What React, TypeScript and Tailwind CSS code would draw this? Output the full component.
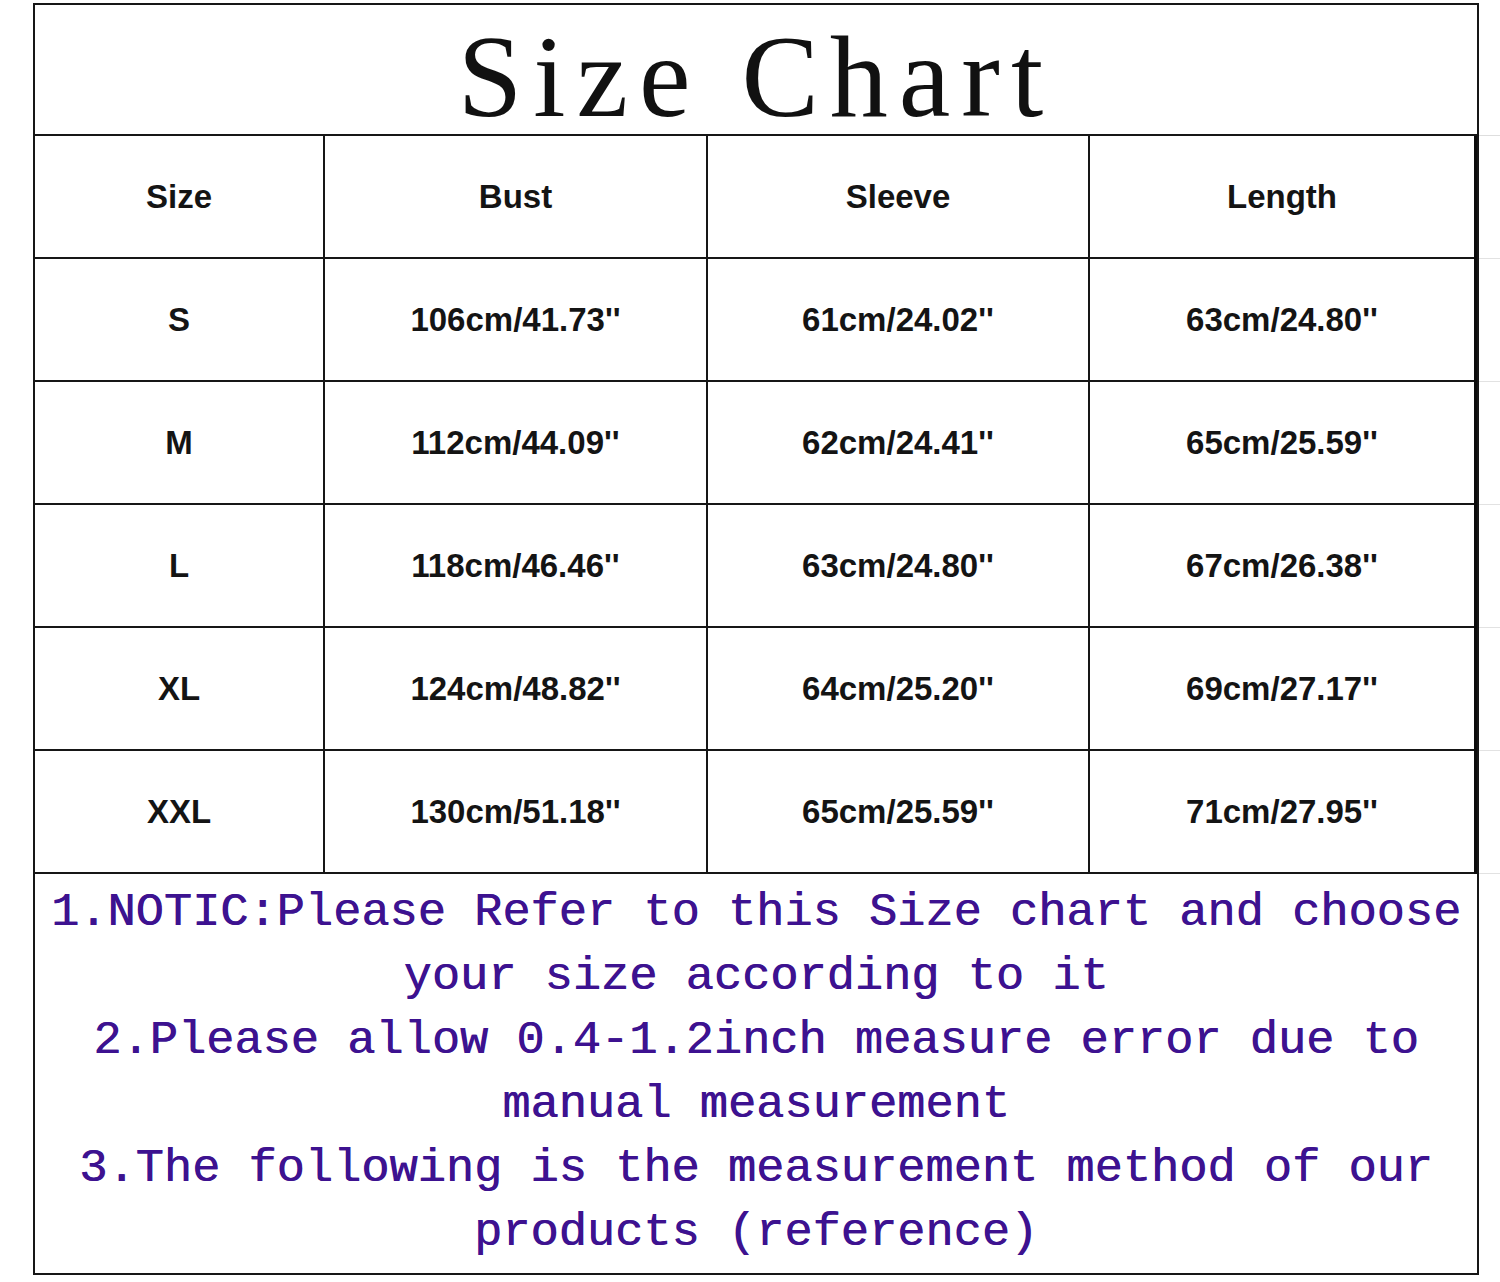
const rows = [
  ["S", "106cm/41.73''", "61cm/24.02''", "63cm/24.80''"],
  ["M", "112cm/44.09''", "62cm/24.41''", "65cm/25.59''"],
  ["L", "118cm/46.46''", "63cm/24.80''", "67cm/26.38''"],
  ["XL", "124cm/48.82''", "64cm/25.20''", "69cm/27.17''"],
  ["XXL", "130cm/51.18''", "65cm/25.59''", "71cm/27.95''"],
];

const notes = [
  "1.NOTIC:Please Refer to this Size chart and choose",
  "your size according to it",
  "2.Please allow 0.4-1.2inch measure error due to",
  "manual measurement",
  "3.The following is the measurement method of our",
  "products (reference)",
];

function Row({ cells }: { cells: string[] }) {
  return (
    <div className="grid grid-cols-[290px_383px_382px_1fr] h-[123px] border-b-2 border-[#161616]">
      {cells.map((c, i) => (
        <div
          key={i}
          className={`flex items-center justify-center ${i < 3 ? "border-r-2 border-[#161616]" : ""}`}
        >
          <span className="font-['Liberation_Sans',Arial,sans-serif] font-bold text-[33px] text-[#141414]">
            {c}
          </span>
        </div>
      ))}
    </div>
  );
}

export default function App() {
  return (
    <div className="bg-white w-[1500px] h-[1282px] pt-[3px] pl-[33px] flex">
      {/* Chart box */}
      <div className="w-[1446px] h-[1272px] border-2 border-[#161616] flex flex-col">
        <div className="h-[131px] border-b-2 border-[#161616] flex items-center justify-center pt-[14px]">
          <h1 className="font-['Liberation_Serif','Times_New_Roman',serif] text-[116px] leading-none text-[#111] tracking-[11px]">
            Size Chart
          </h1>
        </div>

        <div className="border-r-[3px] border-[#0c0c0c]">
          <Row cells={["Size", "Bust", "Sleeve", "Length"]} />
          {rows.map((r) => (
            <Row key={r[0]} cells={r} />
          ))}
        </div>

        <div className="flex-1 pt-[7px] flex flex-col items-center">
          {notes.map((line, i) => (
            <p
              key={i}
              className="font-['Liberation_Mono','Courier_New',monospace] text-[47px] leading-[64px] text-[#3d1290] whitespace-pre [text-shadow:0.6px_0_0_#3d1290]"
            >
              {line}
            </p>
          ))}
        </div>
      </div>

      {/* faint spreadsheet gridlines beyond the chart */}
      <div className="flex-1 flex flex-col">
        <div className="h-[133px] border-b border-[#dedede]" />
        {rows.concat([rows[0]]).map((_, i) => (
          <div key={i} className="h-[123px] border-b border-[#e2e2e2]" />
        ))}
      </div>
    </div>
  );
}
